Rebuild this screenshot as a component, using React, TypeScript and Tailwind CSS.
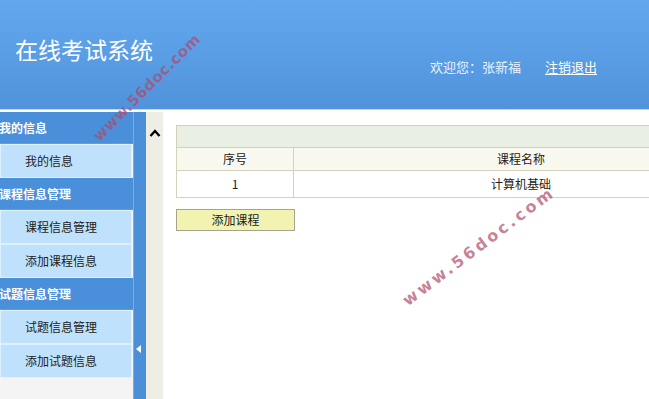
import * as React from 'react';

function SideHeading({ label }: { label: string }) {
  return (
    <div className="h-[32px] flex items-center bg-[#4a8fd9] text-white font-bold text-[12px] -ml-[1px] border-b border-[#5d9de0]">
      {label}
    </div>
  );
}

function SideItem({ label }: { label: string }) {
  return (
    <div className="h-[34px] flex items-center pl-[24px] bg-[#bfe1fb] text-[#222] text-[12px] border border-[#dff0fe] w-[132px]">
      {label}
    </div>
  );
}

function Watermark({ className }: { className: string }) {
  return (
    <span
      className={`absolute whitespace-nowrap font-bold text-[#b04a6a]/70 pointer-events-none ${className}`}
      style={{ fontFamily: '"DejaVu Sans", sans-serif' }}
    >
      www.56doc.com
    </span>
  );
}

export default function App() {
  return (
    <div
      className="relative w-[649px] h-[399px] overflow-hidden bg-white"
      style={{ fontFamily: '"Noto Sans CJK SC", "Liberation Sans", sans-serif' }}
    >
      {/* header */}
      <header className="h-[109px] bg-gradient-to-b from-[#63a8ef] to-[#5093db] flex items-start">
        <div className="pl-[15px] pt-[32px] text-white text-[23px] leading-[34px]">在线考试系统</div>
        <div className="ml-auto mr-[52px] mt-[57px] flex items-center text-[13px] leading-[20px] text-[#e8f2ff]">
          <span>欢迎您：张新福</span>
          <span className="ml-[24px] text-white underline underline-offset-2">注销退出</span>
        </div>
      </header>
      <div className="h-[3px] bg-white border-t border-[#b9dcfa]" />

      <div className="flex h-[287px]">
        {/* sidebar */}
        <aside className="w-[133px] bg-[#f4f4f4] flex flex-col overflow-hidden">
          <SideHeading label="我的信息" />
          <SideItem label="我的信息" />
          <SideHeading label="课程信息管理" />
          <SideItem label="课程信息管理" />
          <SideItem label="添加课程信息" />
          <SideHeading label="试题信息管理" />
          <SideItem label="试题信息管理" />
          <SideItem label="添加试题信息" />
        </aside>
        <div className="w-[13px] bg-[#4a8fd8] border-l border-[#78aee6] flex flex-col items-center">
          <svg width="6" height="8" viewBox="0 0 6 8" className="mt-[233px] ml-[-2px]">
            <polygon points="5,0 5,8 0,4" fill="#ffffff" />
          </svg>
        </div>
        <div className="w-[17px] bg-[#eeeee4] flex flex-col items-center">
          <svg width="12" height="8" viewBox="0 0 12 8" className="mt-[17px]">
            <polyline points="1.5,7 6,2 10.5,7" fill="none" stroke="#000" strokeWidth="2.4" />
          </svg>
        </div>

        {/* main */}
        <main className="flex-1 pl-[13px] pt-[13px] overflow-hidden">
          <table className="w-[573px] border-collapse text-[12px] text-[#222]">
            <tbody>
              <tr className="h-[22px] bg-[#e9efe2]">
                <td colSpan={2} className="border border-[#d3d3bd]" />
              </tr>
              <tr className="h-[23px] bg-[#f9f8ee]">
                <td className="w-[117px] border border-[#d3d3bd] text-center">序号</td>
                <td className="border border-[#d3d3bd] text-center">课程名称</td>
              </tr>
              <tr className="h-[27px] bg-white">
                <td className="border border-[#d3d3bd] text-center">1</td>
                <td className="border border-[#d3d3bd] text-center">计算机基础</td>
              </tr>
            </tbody>
          </table>
          <button className="mt-[11px] w-[119px] h-[22px] bg-[#f3f3b1] border border-[#a3a38f] text-[12px] text-[#222] leading-[20px]">
            添加课程
          </button>
        </main>
      </div>

      <Watermark className="left-[104px] top-[124px] text-[15px] tracking-[0.5px] origin-bottom-left -rotate-45" />
      <Watermark className="left-[412px] top-[288px] text-[16px] tracking-[3px] origin-bottom-left rotate-[-37deg]" />
    </div>
  );
}
